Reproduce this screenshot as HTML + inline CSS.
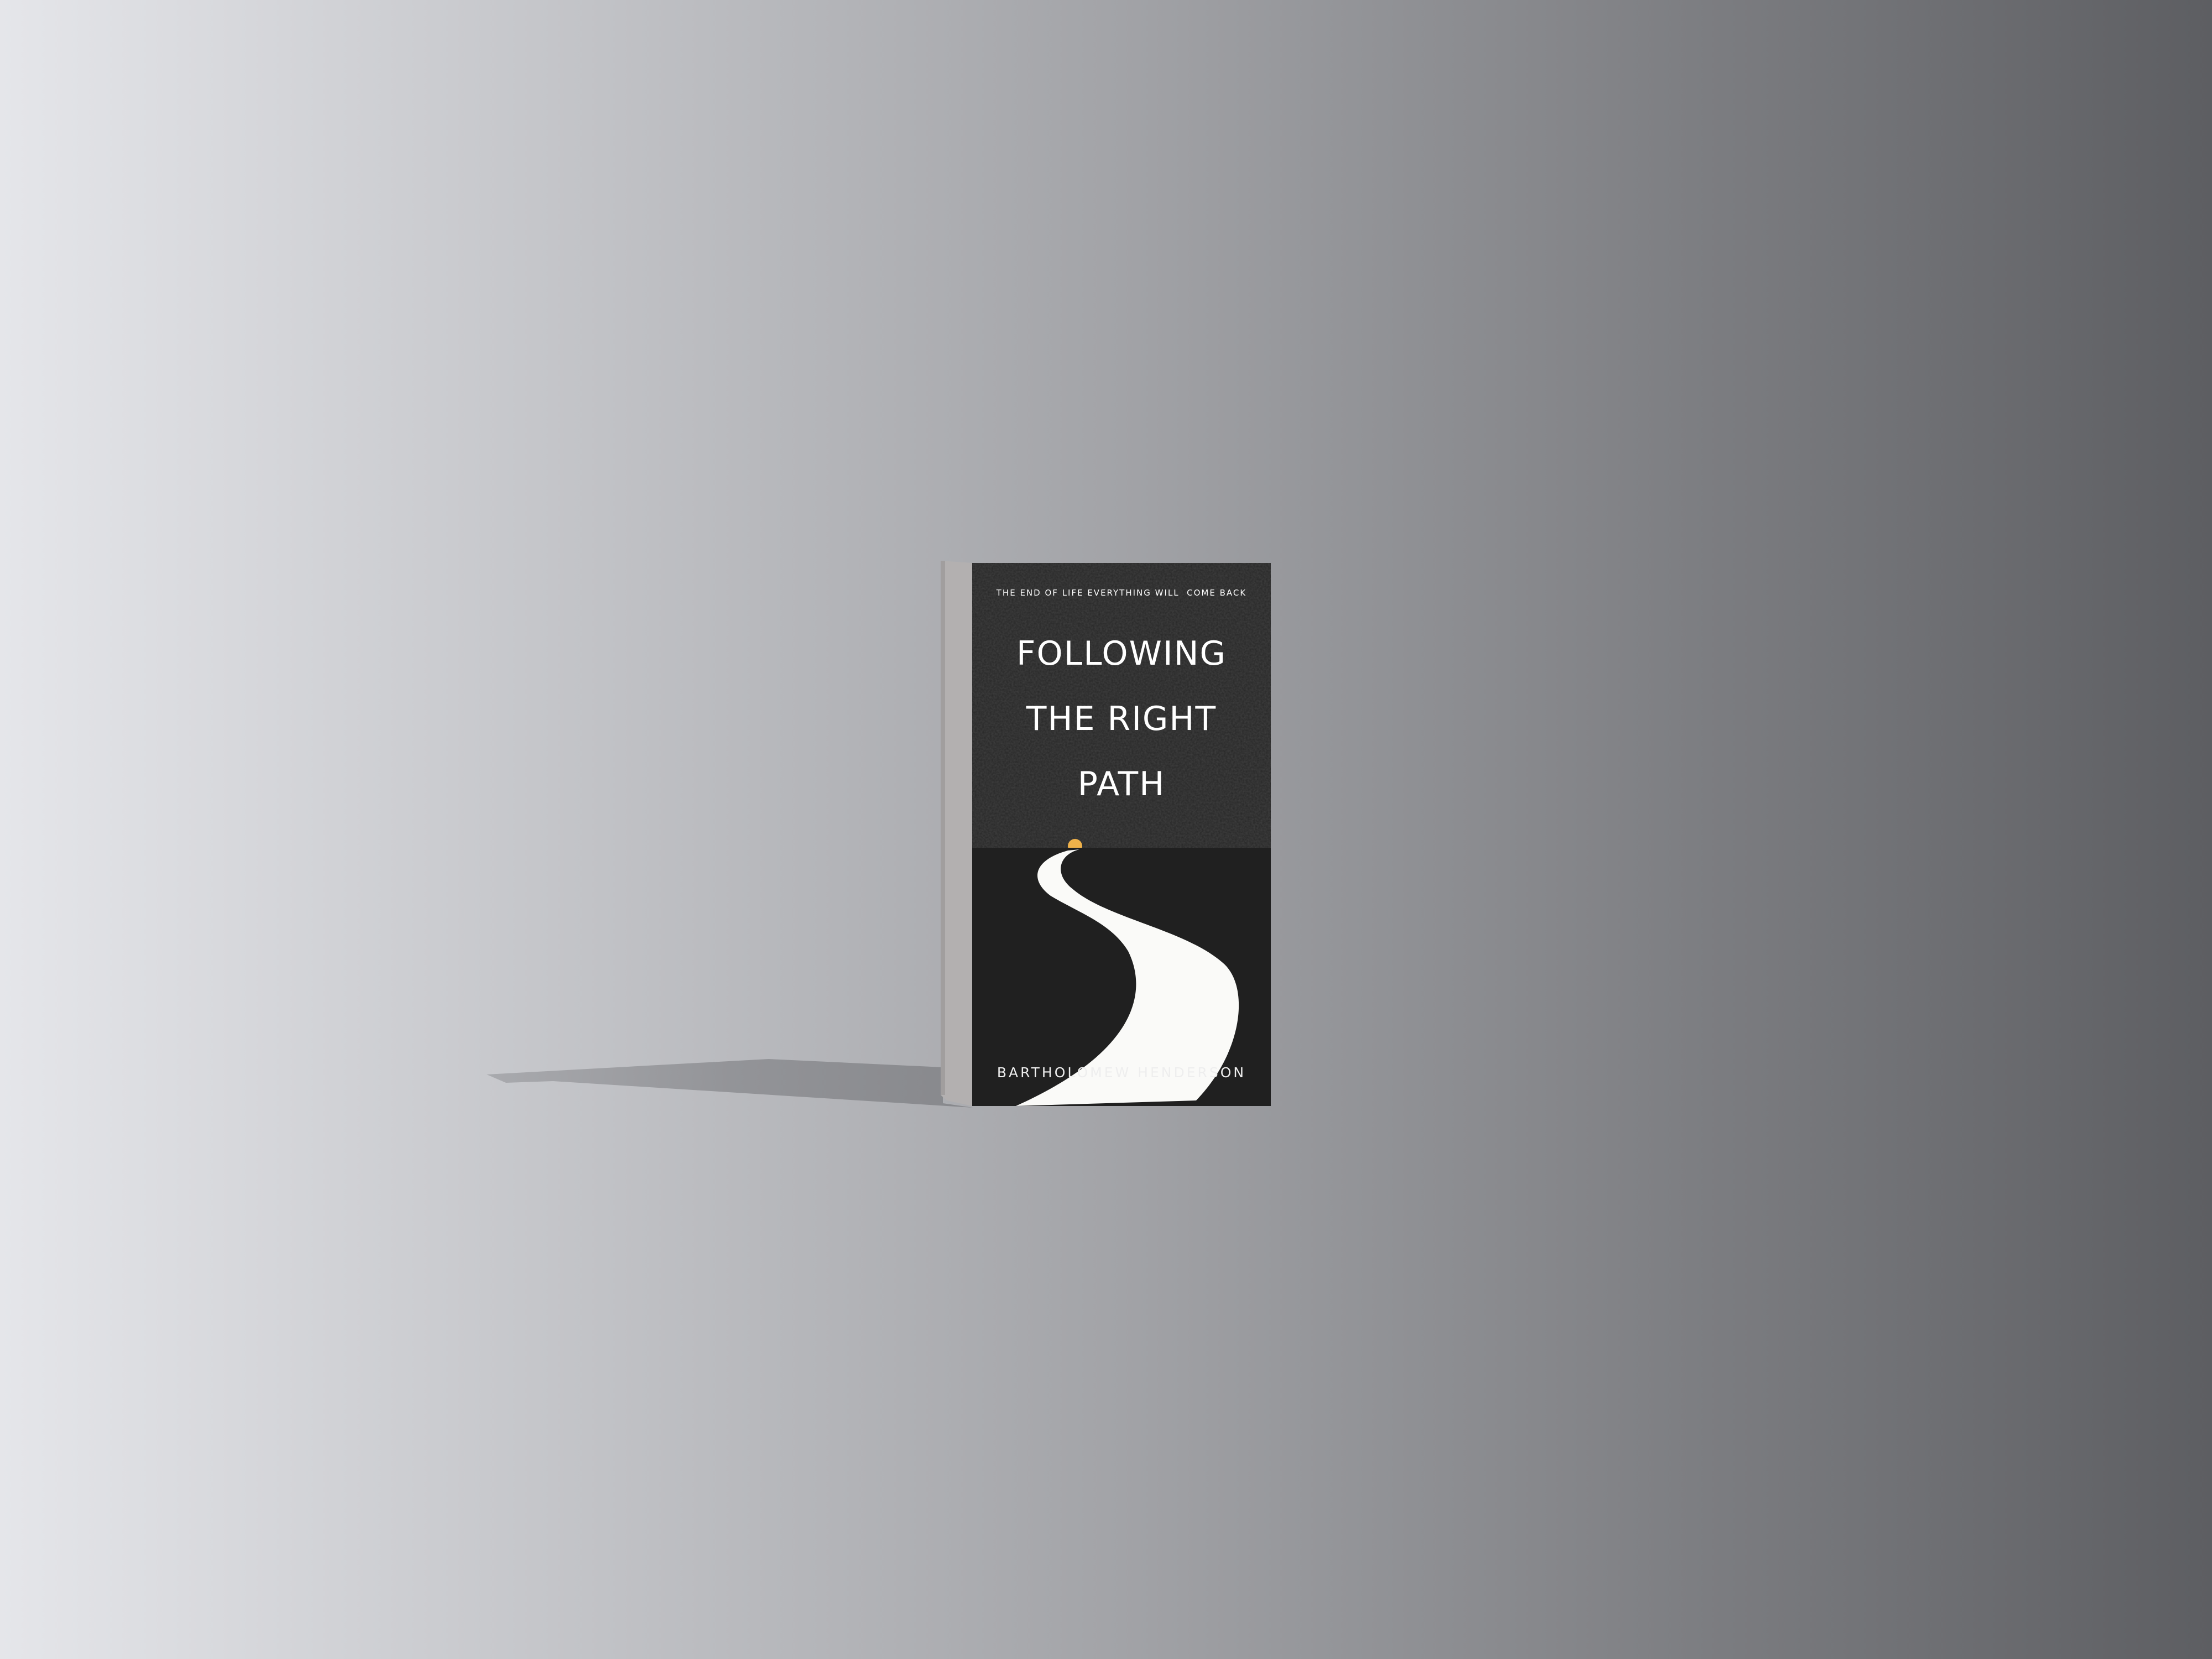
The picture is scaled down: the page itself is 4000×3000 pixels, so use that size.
<!DOCTYPE html>
<html><head><meta charset="utf-8"><style>
html,body{margin:0;padding:0;width:4000px;height:3000px;overflow:hidden}
body{background:linear-gradient(90deg,#e5e6ea 0%,#c4c5c9 25%,#a3a4a8 50%,#7f8084 75%,#5d5e62 100%)}
.t{position:absolute;left:1758px;width:540px;text-align:center;color:#fff;font-family:"DejaVu Sans","Liberation Sans",sans-serif;white-space:nowrap}
</style></head><body>
<svg width="4000" height="3000" style="position:absolute;left:0;top:0">
<defs>
<linearGradient id="sh" x1="0" x2="1"><stop offset="0" stop-color="#a9aaae"/><stop offset="0.5" stop-color="#939498"/><stop offset="1" stop-color="#87888c"/></linearGradient>
<filter id="n"><feTurbulence type="fractalNoise" baseFrequency="0.3" numOctaves="2" seed="3"/><feColorMatrix values="0 0 0 0 1  0 0 0 0 1  0 0 0 0 1  0 0 0 0.12 0"/><feComposite in2="SourceGraphic" operator="in"/></filter>
</defs>
<polygon points="880,1943 1390,1915 1705,1930 1705,1995 1760,2003 1000,1955 915,1958" fill="url(#sh)"/>
<polygon points="1701,1014 1758,1018 1758,2000 1712,1990 1701,1980" fill="#b3b0b0"/>
<rect x="1701" y="1014" width="8" height="966" fill="#a19e9e"/>
<rect x="1758" y="1018" width="540" height="515" fill="#262626"/>
<rect x="1758" y="1018" width="540" height="515" fill="#fff" filter="url(#n)"/>
<rect x="1758" y="1533" width="540" height="467" fill="#202020"/>
<circle cx="1944" cy="1530" r="13" fill="#f0b24a"/>
<rect x="1900" y="1533" width="90" height="12" fill="#202020"/>
<path d="M1931,1538 C1870,1555 1860,1590 1900,1620 C1950,1650 2010,1670 2040,1720 C2075,1790 2060,1900 1837,2000 L2163,1990 C2250,1900 2260,1780 2210,1740 C2140,1680 2000,1660 1939,1607 C1905,1580 1915,1545 1952,1536 Z" fill="#fafaf8"/>
</svg>
<div class="t" style="top:1063px;font-size:15px;letter-spacing:2px">THE END OF LIFE EVERYTHING WILL&nbsp; COME BACK</div>
<div class="t" style="top:1123px;font-size:60px;line-height:118px;letter-spacing:2px">FOLLOWING<br>THE RIGHT<br>PATH</div>
<div class="t" style="top:1925px;font-size:25px;letter-spacing:4px;color:#eee">BARTHOLOMEW HENDERSON</div>
</body></html>
